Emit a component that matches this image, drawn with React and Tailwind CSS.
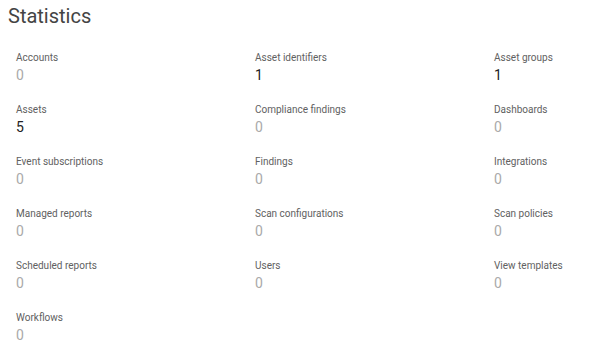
import React from 'react'

const stats = [
  ['Accounts', 0],
  ['Asset identifiers', 1],
  ['Asset groups', 1],
  ['Assets', 5],
  ['Compliance findings', 0],
  ['Dashboards', 0],
  ['Event subscriptions', 0],
  ['Findings', 0],
  ['Integrations', 0],
  ['Managed reports', 0],
  ['Scan configurations', 0],
  ['Scan policies', 0],
  ['Scheduled reports', 0],
  ['Users', 0],
  ['View templates', 0],
  ['Workflows', 0],
]

function Stat({ label, value }) {
  return (
    <div className="h-[52px] pt-[4px]">
      <div className="text-[10px] leading-[14px] text-[#616161]">{label}</div>
      <div className={'text-[14px] leading-[20px] ' + (value > 0 ? 'text-[#222222]' : 'text-[#aaaaaa]')}>
        {value}
      </div>
    </div>
  )
}

export default function App() {
  return (
    <div className="w-[593px] h-[349px] bg-white overflow-hidden" style={{ fontFamily: 'Roboto, sans-serif' }}>
      <h1 className="text-[20px] leading-[30px] text-[#444444] pl-[8px] pt-[1px]">Statistics</h1>
      <div className="grid grid-cols-[239px_239px_1fr] pl-[16px] pt-[16px]">
        {stats.map(([label, value]) => (
          <Stat key={label} label={label} value={value} />
        ))}
      </div>
    </div>
  )
}
